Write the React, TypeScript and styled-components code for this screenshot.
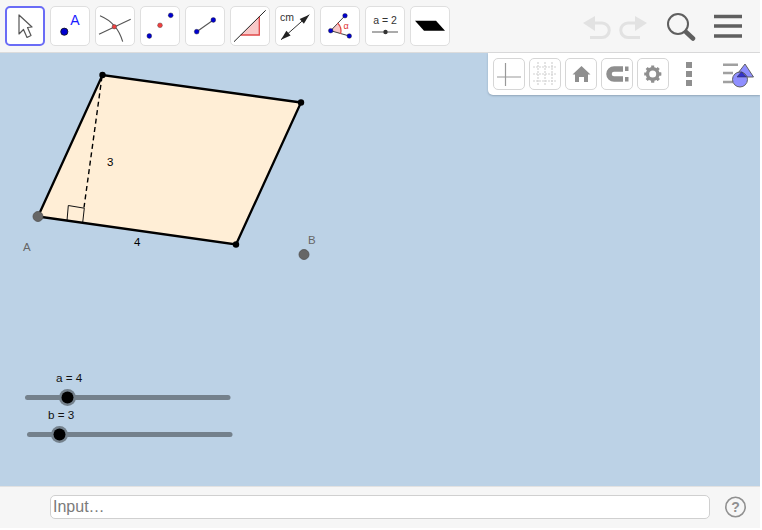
import React from "react";
import styled, { createGlobalStyle } from "styled-components";

const Global = createGlobalStyle`
  html, body { margin: 0; padding: 0; background: #fff; }
  body { font-family: "Liberation Sans", Arial, sans-serif; }
  * { box-sizing: border-box; }
`;

const Applet = styled.div`
  width: 760px;
  height: 528px;
  display: flex;
  flex-direction: column;
  position: relative;
  overflow: hidden;
`;

const Toolbar = styled.header`
  height: 53px;
  flex: none;
  background: #f6f6f6;
  border-bottom: 1px solid #dcdcdc;
  display: flex;
  align-items: flex-start;
  padding: 6px 0 0 5px;
`;

const ToolGroup = styled.div`
  display: flex;
  gap: 5px;
`;

const ToolButton = styled.button<{ $active?: boolean }>`
  width: 40px;
  height: 40px;
  padding: 0;
  background: #fff;
  border: ${(p) => (p.$active ? "2px solid #6a6cf6" : "1px solid #dfdfdf")};
  border-radius: 5px;
  display: flex;
  align-items: center;
  justify-content: center;
  svg { width: 36px; height: 36px; display: block; }
`;

const HistoryGroup = styled.div`
  margin-left: auto;
  display: flex;
  align-items: center;
  height: 40px;
  padding-right: 18px;
`;

const IconButton = styled.div<{ $w: number; $ml?: number }>`
  width: ${(p) => p.$w}px;
  height: 40px;
  margin-left: ${(p) => p.$ml ?? 0}px;
  svg { display: block; width: 100%; height: 100%; }
`;

const Canvas = styled.main`
  flex: 1;
  position: relative;
  background: #bcd2e6;
  svg.drawing { position: absolute; inset: 0; width: 100%; height: 100%; }
`;

const StyleBar = styled.div`
  position: absolute;
  top: 0;
  right: 0;
  width: 272px;
  height: 42px;
  background: #fff;
  border-bottom-left-radius: 5px;
  box-shadow: 0 1px 2px rgba(90, 110, 130, 0.45);
  display: flex;
  align-items: flex-start;
  gap: 4px;
  padding: 5px 0 0 5px;
`;

const StyleButton = styled.div`
  width: 32px;
  height: 32px;
  background: #fff;
  border: 1px solid #d6d6d6;
  border-radius: 5px;
  svg { display: block; width: 30px; height: 30px; }
`;

const MoreDots = styled.div`
  width: 32px;
  height: 32px;
  display: flex;
  flex-direction: column;
  align-items: center;
  gap: 3px;
  padding-top: 4px;
  span { width: 6px; height: 6px; background: #8f8f8f; display: block; }
`;

const ViewIcon = styled.div`
  width: 32px;
  height: 32px;
  margin-left: 14px;
  svg { display: block; width: 32px; height: 32px; overflow: visible; }
`;

const InputBar = styled.footer`
  height: 42px;
  flex: none;
  background: #f6f6f6;
  border-top: 1px solid #e2e2e2;
  display: flex;
  align-items: center;
  padding: 0 14px 2px 50px;
`;

const InputBox = styled.div`
  width: 660px;
  height: 24px;
  background: #fff;
  border: 1px solid #d0d0d0;
  border-radius: 5px;
  color: #7a7a7a;
  font-size: 16px;
  line-height: 22px;
  padding-left: 2px;
`;

const Help = styled.div`
  margin-left: auto;
  width: 22px;
  height: 22px;
  svg { display: block; width: 22px; height: 22px; }
`;

const blue = "#0000d0";

const tools = [
  <svg viewBox="0 0 36 36" key="0">
    <path d="M12 7 L12 26 L16.5 21.5 L20 29.5 L24 27.5 L20.5 19.5 L25 19 Z" fill="#fff" stroke="#555" strokeWidth="1.2" strokeLinejoin="round" />
  </svg>,
  <svg viewBox="0 0 36 36" key="1">
    <circle cx="12.3" cy="23.7" r="3.6" fill={blue} stroke="#111" strokeWidth="0.8" />
    <text x="18.2" y="17.2" fontSize="14" fill="#1a1aff" fontFamily="Liberation Sans">A</text>
  </svg>,
  <svg viewBox="0 0 36 36" key="2">
    <path d="M3 7.7 C 11 11 21 17 25.7 33.7" fill="none" stroke="#555" strokeWidth="1.1" />
    <path d="M2 26.3 L 33.7 11.3" stroke="#555" strokeWidth="1.1" />
    <circle cx="17.3" cy="18.7" r="2.2" fill="#f04040" stroke="#444" strokeWidth="0.5" />
  </svg>,
  <svg viewBox="0 0 36 36" key="3">
    <circle cx="7.3" cy="28" r="2.4" fill={blue} stroke="#222" strokeWidth="0.4" />
    <circle cx="18" cy="17.3" r="2.4" fill="#f04040" stroke="#444" strokeWidth="0.4" />
    <circle cx="28.7" cy="7.3" r="2.4" fill={blue} stroke="#222" strokeWidth="0.4" />
  </svg>,
  <svg viewBox="0 0 36 36" key="4">
    <line x1="9.7" y1="23.7" x2="26.3" y2="12" stroke="#555" strokeWidth="1.1" />
    <circle cx="9.7" cy="23.7" r="2.4" fill={blue} stroke="#222" strokeWidth="0.4" />
    <circle cx="26.3" cy="12" r="2.4" fill={blue} stroke="#222" strokeWidth="0.4" />
  </svg>,
  <svg viewBox="0 0 36 36" key="5">
    <path d="M8.7 27 L27.3 8.7 L27.3 27 Z" fill="#f8c8c8" />
    <path d="M8.7 27 L27.3 27 L27.3 8.7" fill="none" stroke="#e04848" strokeWidth="1.3" />
    <line x1="2" y1="33.7" x2="33.7" y2="2.3" stroke="#222" strokeWidth="1" />
  </svg>,
  <svg viewBox="0 0 36 36" key="6">
    <text x="3" y="13" fontSize="10.5" fill="#333" fontFamily="Liberation Sans">cm</text>
    <line x1="4" y1="31.7" x2="32.3" y2="6.7" stroke="#333" strokeWidth="1" />
    <path d="M32.3 6.7 L26.9 15.7 L22.7 10.9 Z" fill="#222" />
    <path d="M4 31.7 L13.6 27.5 L9.4 22.7 Z" fill="#222" />
  </svg>,
  <svg viewBox="0 0 36 36" key="7">
    <path d="M8.7 22.7 L15.5 15 A 11 11 0 0 1 18.5 26 Z" fill="#f8c8c8" />
    <path d="M8.7 22.7 L23 7.7 M8.7 22.7 L27.3 28" stroke="#444" strokeWidth="1" />
    <path d="M15.5 15 A 11 11 0 0 1 18.5 26" fill="none" stroke="#e04848" strokeWidth="1.2" />
    <text x="21.5" y="21" fontSize="9" fill="#e03030" fontFamily="Liberation Sans">α</text>
    <circle cx="23" cy="7.7" r="2.3" fill={blue} stroke="#222" strokeWidth="0.4" />
    <circle cx="8.7" cy="22.7" r="2.3" fill={blue} stroke="#222" strokeWidth="0.4" />
    <circle cx="27.3" cy="28" r="2.3" fill={blue} stroke="#222" strokeWidth="0.4" />
  </svg>,
  <svg viewBox="0 0 36 36" key="8">
    <text x="18" y="16" fontSize="10.5" textAnchor="middle" fill="#333" fontFamily="Liberation Sans">a = 2</text>
    <line x1="5" y1="24" x2="31" y2="24" stroke="#666" strokeWidth="1.1" />
    <circle cx="18.5" cy="24" r="2.2" fill="#333" />
  </svg>,
  <svg viewBox="0 0 36 36" key="9">
    <path d="M3 12.7 L24 12.7 L33 22.7 L12 22.7 Z" fill="#000" />
  </svg>,
];

const A = [38, 163];
const T = [102.5, 21.5];
const R = [301, 49];
const S = [236, 191];

const Geometry = () => (
  <svg className="drawing" viewBox="0 0 760 432">
    <polygon points={`${A} ${T} ${R} ${S}`} fill="#ffeed6" stroke="none" />
    <path d="M67 167 L68.3 152 L84.3 154.7 L82.7 169" fill="none" stroke="#111" strokeWidth="1" />
    <line x1="102" y1="23" x2="84" y2="154" stroke="#000" strokeWidth="1.4" strokeDasharray="5 3.5" />
    <polygon points={`${A} ${T} ${R} ${S}`} fill="none" stroke="#000" strokeWidth="2.3" />
    <circle cx={T[0]} cy={T[1]} r="3.2" fill="#000" />
    <circle cx={R[0]} cy={R[1]} r="3.2" fill="#000" />
    <circle cx={S[0]} cy={S[1]} r="3.2" fill="#000" />
    <circle cx={A[0]} cy={A[1]} r="5" fill="#666" stroke="#505050" strokeWidth="0.8" />
    <circle cx="304" cy="201" r="5" fill="#666" stroke="#505050" strokeWidth="0.8" />
    <text x="23" y="197" fontSize="11.5" fill="#666">A</text>
    <text x="308" y="190" fontSize="11.5" fill="#666">B</text>
    <text x="107" y="112.5" fontSize="11.5" fill="#000">3</text>
    <text x="134" y="192.5" fontSize="11.5" fill="#000">4</text>

    <text x="56" y="328.5" fontSize="11.7" fill="#111">a = 4</text>
    <line x1="27.5" y1="344" x2="228" y2="344" stroke="#74818c" strokeWidth="5" strokeLinecap="round" />
    <circle cx="67.5" cy="344" r="8.5" fill="#74818c" />
    <circle cx="67.5" cy="344" r="6" fill="#000" />

    <text x="48" y="365.5" fontSize="11.7" fill="#111">b = 3</text>
    <line x1="29.5" y1="381" x2="230" y2="381" stroke="#74818c" strokeWidth="5" strokeLinecap="round" />
    <circle cx="59.5" cy="381" r="8.5" fill="#74818c" />
    <circle cx="59.5" cy="381" r="6" fill="#000" />
  </svg>
);

export default function App() {
  return (
    <>
      <Global />
      <Applet>
        <Toolbar>
          <ToolGroup>
            {tools.map((icon, i) => (
              <ToolButton key={i} $active={i === 0}>{icon}</ToolButton>
            ))}
          </ToolGroup>
          <HistoryGroup>
            <IconButton $w={30}>
              <svg viewBox="0 0 30 40">
                <path d="M1 17 L13 10 L13 25 Z" fill="#e2e2e2" />
                <path d="M12 17 H20 A7 7 0 0 1 20 31.5 H8" fill="none" stroke="#e2e2e2" strokeWidth="3" />
              </svg>
            </IconButton>
            <IconButton $w={30} $ml={7}>
              <svg viewBox="0 0 30 40">
                <path d="M28 17 L16 10 L16 25 Z" fill="#e2e2e2" />
                <path d="M17 17 H9 A7 7 0 0 0 9 31.5 H21" fill="none" stroke="#e2e2e2" strokeWidth="3" />
              </svg>
            </IconButton>
            <IconButton $w={30} $ml={17}>
              <svg viewBox="0 0 30 40">
                <circle cx="12" cy="18" r="10" fill="none" stroke="#5f5f5f" strokeWidth="2" />
                <line x1="20" y1="26" x2="27" y2="32.5" stroke="#5f5f5f" strokeWidth="4.5" strokeLinecap="round" />
              </svg>
            </IconButton>
            <IconButton $w={28} $ml={18}>
              <svg viewBox="0 0 28 40">
                <path d="M0 10.5 H28 M0 20 H28 M0 30 H28" stroke="#5f5f5f" strokeWidth="3.4" />
              </svg>
            </IconButton>
          </HistoryGroup>
        </Toolbar>
        <Canvas>
          <Geometry />
          <StyleBar>
            <StyleButton>
              <svg viewBox="0 0 30 30">
                <path d="M11.5 4 V27 M3 18 H27" stroke="#999" strokeWidth="1.2" />
              </svg>
            </StyleButton>
            <StyleButton>
              <svg viewBox="0 0 30 30">
                <path d="M8 3 V27 M15 3 V27 M22 3 V27 M3 8 H27 M3 15 H27 M3 22 H27" stroke="#d2d2d2" strokeWidth="1.2" strokeDasharray="2 1" />
              </svg>
            </StyleButton>
            <StyleButton>
              <svg viewBox="0 0 30 30">
                <path d="M15.5 7 L24.5 15.5 H22 V23 H18 V18 H13 V23 H9 V15.5 H6.5 Z" fill="#8f8f8f" />
              </svg>
            </StyleButton>
            <StyleButton>
              <svg viewBox="0 0 30 30">
                <path d="M21 10 H12 A5 5 0 0 0 12 20 H21" fill="none" stroke="#8f8f8f" strokeWidth="5.5" />
                <rect x="23" y="7.5" width="3.5" height="4.5" fill="#8f8f8f" />
                <rect x="23" y="18" width="3.5" height="4.5" fill="#8f8f8f" />
              </svg>
            </StyleButton>
            <StyleButton>
              <svg viewBox="0 0 30 30">
                <circle cx="14.7" cy="15" r="5.2" fill="none" stroke="#8f8f8f" strokeWidth="3.4" />
                <path d="M14.7 6.5 V23.5 M6.2 15 H23.2 M8.7 9 L20.7 21 M20.7 9 L8.7 21" stroke="#8f8f8f" strokeWidth="3" strokeDasharray="2.5 12" />
                <path d="M14.7 23.5 V21 M23.2 15 H20.7 M20.7 21 L19 19.3" stroke="#8f8f8f" strokeWidth="3" />
              </svg>
            </StyleButton>
            <MoreDots>
              <span /><span /><span />
            </MoreDots>
            <ViewIcon>
              <svg viewBox="0 0 32 32">
                <path d="M0 6.7 H15 M0 15 H10 M0 24 H10" stroke="#a0a0a0" strokeWidth="2.4" />
                <path d="M22 6 L30.5 19 L12 19 Z" fill="#8f8fff" stroke="#555" strokeWidth="0.9" />
                <circle cx="17" cy="21.5" r="7.5" fill="#8f8fff" stroke="#555" strokeWidth="0.9" />
                <path d="M14 19 L18.5 13.7 L23.5 19 Z" fill="#3333cc" stroke="#333" strokeWidth="0.5" />
              </svg>
            </ViewIcon>
          </StyleBar>
        </Canvas>
        <InputBar>
          <InputBox>Input…</InputBox>
          <Help>
            <svg viewBox="0 0 22 22">
              <circle cx="11.5" cy="11" r="9.7" fill="none" stroke="#909090" strokeWidth="1.6" />
              <text x="11.5" y="16" fontSize="14" fontWeight="700" textAnchor="middle" fill="#909090" fontFamily="Liberation Sans">?</text>
            </svg>
          </Help>
        </InputBar>
      </Applet>
    </>
  );
}
